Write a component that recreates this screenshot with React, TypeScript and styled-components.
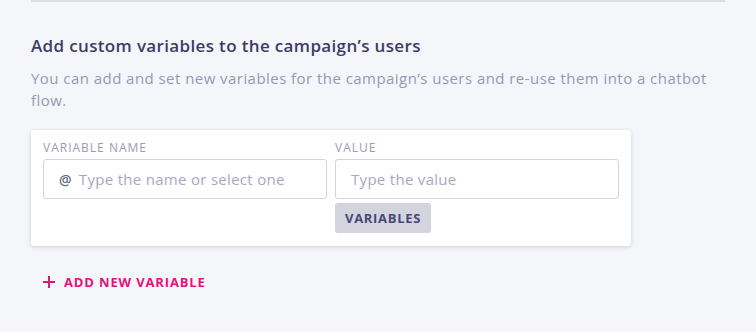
import React from 'react'
import styled, { createGlobalStyle } from 'styled-components'

const GlobalStyle = createGlobalStyle`
  body {
    margin: 0;
    background: #f5f6fa;
    font-family: "Open Sans", Lato, sans-serif;
  }
`

const Page = styled.div`
  padding: 0 31px;
  width: 694px;
`

const Divider = styled.div`
  height: 2px;
  background: #dcdde2;
`

const Section = styled.section`
  padding-top: 32px;
`

const Title = styled.h2`
  margin: 0;
  font-size: 17px;
  line-height: 24px;
  font-weight: 600;
  letter-spacing: 0.35px;
  color: #3e3c66;
`

const Lead = styled.p`
  margin: 9px 0 0;
  font-size: 15px;
  line-height: 22px;
  letter-spacing: 0.45px;
  color: #9896b6;
`

const Card = styled.div`
  margin-top: 19px;
  width: 600px;
  box-sizing: border-box;
  background: #fff;
  border-radius: 3px;
  box-shadow: 0 1px 4px rgba(40, 40, 80, 0.18);
  padding: 10px 12px 13px;
  display: grid;
  grid-template-columns: 284px 284px;
  column-gap: 8px;
`

const Field = styled.div`
  display: flex;
  flex-direction: column;
  align-items: flex-start;
`

const Label = styled.label`
  font-size: 12px;
  line-height: 16px;
  letter-spacing: 1px;
  color: #9c9bb5;
  margin-bottom: 3px;
`

const Input = styled.div`
  width: 100%;
  height: 40px;
  box-sizing: border-box;
  border: 1px solid #d3d3dc;
  border-radius: 3px;
  display: flex;
  align-items: center;
  padding-left: 15px;
  font-size: 15px;
  letter-spacing: 0.3px;
  color: #a8a7bf;
  gap: 7px;
`

const At = styled.span`
  color: #5d6780;
  font-size: 14px;
  font-weight: 600;
`

const Chip = styled.button`
  margin-top: 4px;
  height: 30px;
  padding: 0 10px;
  border: none;
  border-radius: 3px;
  background: #d4d4de;
  color: #4a4778;
  font-family: inherit;
  font-size: 13px;
  font-weight: 700;
  letter-spacing: 0.7px;
`

const AddLink = styled.div`
  margin-top: 27px;
  padding-left: 12px;
  display: flex;
  align-items: center;
  gap: 9px;
  color: #e2137b;
  font-size: 13px;
  font-weight: 700;
  letter-spacing: 0.85px;
`

const App = () => {
  return (
    <Page>
      <GlobalStyle />
      <Divider />
      <Section>
        <Title>Add custom variables to the campaign’s users</Title>
        <Lead>
          You can add and set new variables for the campaign’s users and re-use them into a chatbot flow.
        </Lead>
        <Card>
          <Field>
            <Label>VARIABLE NAME</Label>
            <Input>
              <At>@</At>Type the name or select one
            </Input>
          </Field>
          <Field>
            <Label>VALUE</Label>
            <Input>Type the value</Input>
            <Chip>VARIABLES</Chip>
          </Field>
        </Card>
        <AddLink>
          <svg width="12" height="12" viewBox="0 0 12 12">
            <path d="M6 0v12M0 6h12" stroke="#e2137b" strokeWidth="2" />
          </svg>
          ADD NEW VARIABLE
        </AddLink>
      </Section>
    </Page>
  )
}

export default App
